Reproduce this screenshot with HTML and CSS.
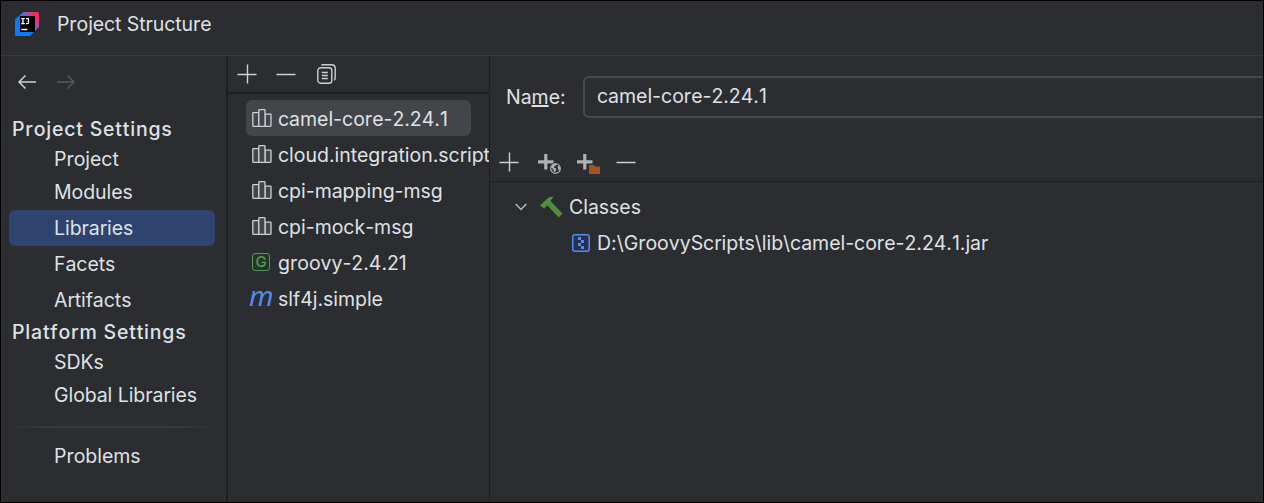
FILE: index.html
```html
<!DOCTYPE html>
<html lang="en">
<head>
<meta charset="utf-8">
<title>Project Structure</title>
<link rel="stylesheet" href="styles.css">
</head>
<body>
<svg class="defs" width="0" height="0">
  <symbol id="lib" viewBox="0 0 20 18">
    <g fill="#43454a" stroke="#ced0d6" stroke-width="1.3">
      <rect x="0.8" y="3.7" width="6" height="13.6" rx=".5"/>
      <rect x="13" y="5.2" width="6" height="12.1" rx=".5"/>
      <rect x="6.8" y="0.7" width="6.2" height="16.6" rx=".5"/>
    </g>
  </symbol>
  <symbol id="plus" viewBox="0 0 20 20"><path d="M10.500 .5v19M.5 10.500h19" stroke="#ced0d6" stroke-width="1.4"/></symbol>
  <symbol id="minus" viewBox="0 0 20 20"><path d="M.5 10.500h19" stroke="#ced0d6" stroke-width="1.5"/></symbol>
</svg>
<div class="window">
  <header class="titlebar">
    <svg class="logo" width="24" height="24" viewBox="0 0 24 24">
      <defs><linearGradient id="lg" x1="0.1" y1="0.8" x2="0.95" y2="0.15">
        <stop offset=".4" stop-color="#087cfa"/><stop offset=".68" stop-color="#8a5cc0"/><stop offset=".94" stop-color="#fe2857"/>
      </linearGradient></defs>
      <path d="M8.5 0H22.5Q24 0 24 1.5V15L15 24H1.5Q0 24 0 22.5V7.5Z" fill="url(#lg)"/>
      <rect x="5" y="4" width="15" height="16"/>
      <path d="M6.2 6.7h3.6M8 6.7v5M6.2 11.7h3.6M11 6.7h3M13.4 6.7v3.8q0 1.2-1.2 1.2H11M6.3 17.5h6" fill="none" stroke="#fff" stroke-width="1.3"/>
    </svg>
    <span>Project Structure</span>
  </header>
  <div class="body">
    <nav class="sidebar">
      <div class="history">
        <svg width="18" height="14" viewBox="0 0 18 14" fill="none" stroke="#ced0d6" stroke-width="1.5"><path d="M18 7H1M7.5.5L1 7l6.500 6.500"/></svg>
        <svg width="18" height="14" viewBox="0 0 18 14" fill="none" stroke="#57585b" stroke-width="1.5"><path d="M0 7H17M10.500.5L17 7l-6.500 6.500"/></svg>
      </div>
      <div class="section">Project Settings</div>
      <div class="item first">Project</div>
      <div class="item">Modules</div>
      <div class="item selected">Libraries</div>
      <div class="item">Facets</div>
      <div class="item">Artifacts</div>
      <div class="section platform">Platform Settings</div>
      <div class="item sdks">SDKs</div>
      <div class="item global">Global Libraries</div>
      <div class="separator"></div>
      <div class="item">Problems</div>
    </nav>
    <section class="libraries">
      <div class="toolbar">
        <svg width="20" height="20"><use href="#plus"/></svg>
        <svg width="20" height="20"><use href="#minus"/></svg>
        <svg class="copy" width="19" height="20" viewBox="0 0 19 20" fill="none" stroke="#ced0d6" stroke-width="1.4">
          <rect x=".8" y="3.800" width="14" height="15.400" rx="2.800"/>
          <path d="M4.300 1.200Q5 .8 6 .8h8.500q3.700 0 3.700 3.700v9.500q0 1.500-1 2.300M4.800 8.500h6M4.800 11.500h6M4.800 14.500h6"/>
        </svg>
      </div>
      <div class="list">
        <div class="row selected"><svg class="icon" width="20" height="18"><use href="#lib"/></svg><span class="text">camel-core-2.24.1</span></div>
        <div class="row"><svg class="icon" width="20" height="18"><use href="#lib"/></svg><span class="text">cloud.integration.script</span></div>
        <div class="row"><svg class="icon" width="20" height="18"><use href="#lib"/></svg><span class="text">cpi-mapping-msg</span></div>
        <div class="row"><svg class="icon" width="20" height="18"><use href="#lib"/></svg><span class="text">cpi-mock-msg</span></div>
        <div class="row"><span class="icon groovy"><span>G</span></span><span class="text">groovy-2.4.21</span></div>
        <div class="row"><span class="icon maven">m</span><span class="text">slf4j.simple</span></div>
      </div>
    </section>
    <main class="details">
      <div class="name-row">
        <label class="label">Na<span class="mnemonic">m</span>e:</label>
        <div class="field">camel-core-2.24.1</div>
      </div>
      <div class="actions">
        <svg width="20" height="20"><use href="#plus"/></svg>
        <svg class="add" width="24" height="21" viewBox="0 0 24 21">
          <path d="M7.800 1v15.500M0 8.800h15.500" stroke="#afb1b3" stroke-width="3.200"/>
          <circle cx="17.500" cy="15.500" r="6" fill="#2b2d30"/>
          <circle cx="17.500" cy="15.500" r="4.800" fill="#2b2d30" stroke="#afb1b3" stroke-width="1.200"/>
          <path d="M13 14.500l1.500-3 3.500-.8.500 1.300-2 1.200-.5 1.500 2 .8.300 1.200-1.300 2.500-1.500-1.500-.3-1.700zM19.500 13.500l2.500-.5v3.500l-1.500.5z" fill="#afb1b3"/>
        </svg>
        <svg class="add" width="24" height="21" viewBox="0 0 24 21">
          <path d="M7.800 1v15.500M0 8.800h15.500" stroke="#afb1b3" stroke-width="3.200"/>
          <path d="M12 12h5l1.500 1.500H23V21H12z" fill="#a65027"/>
        </svg>
        <svg width="20" height="20"><use href="#minus"/></svg>
      </div>
      <div class="tree">
        <div class="node">
          <svg class="chevron" width="12" height="8" viewBox="0 0 12 8" fill="none" stroke="#b4b8bf" stroke-width="1.500"><path d="M.7 1L6 6.500 11.300 1"/></svg>
          <svg class="hammer" width="23" height="22" viewBox="0 0 23 22"><path d="M0 9.500L8.500 1.500Q10 .6 13.500 .8L10.500 5 22.500 17.500 18.600 21.500 7.500 9.500 4 12.500Z" fill="#4d8f3a"/></svg>
          Classes
        </div>
        <div class="node leaf">
          <svg class="jar" width="18" height="18" viewBox="0 0 18 18"><rect x=".8" y=".8" width="16.400" height="16.400" rx="2.200" fill="#25324d" stroke="#548af7" stroke-width="1.500"/><path d="M6 3h3v3H6zM9 6h3v3H9zM6 9h3v3H6zM9 12h3v3H9z" fill="#548af7"/></svg>
          D:\GroovyScripts\lib\camel-core-2.24.1.jar
        </div>
      </div>
    </main>
  </div>
</div>
</body>
</html>
```
FILE: styles.css
```css
* { box-sizing: border-box; }
body {
  margin: 0;
  background: #000;
  color: #dfe1e5;
  font: 19.5px/24px Inter, "Liberation Sans", sans-serif;
  font-kerning: none;
  letter-spacing: -.03px;
}
.defs { position: absolute; }
svg { flex: none; display: block; }
.window {
  display: flex;
  flex-direction: column;
  width: 1264px;
  height: 503px;
  border: 1px solid #000;
  background: #2b2d30;
  overflow: hidden;
}
.titlebar {
  display: flex;
  align-items: center;
  gap: 18px;
  height: 55px;
  flex: none;
  padding: 0 14px 8px;
  border-bottom: 1px solid #393b40;
  letter-spacing: -.1px;
}
.body { display: flex; flex: 1; min-height: 0; }
.sidebar {
  width: 227px;
  flex: none;
  border-right: 2px solid #1e1f22;
}
.history { display: flex; align-items: center; gap: 21px; height: 58px; padding: 0 17px 6px; }
.section {
  height: 30px;
  padding-left: 11px;
  line-height: 30px;
  font-weight: 500;
  letter-spacing: .8px;
}
.platform { height: 28px; line-height: 28px; }
.item {
  height: 36px;
  margin: 0 11px 0 8px;
  padding-left: 45px;
  border-radius: 6px;
  line-height: 36px;
  letter-spacing: -.05px;
}
.first { height: 30px; line-height: 30px; }
.item.selected { background: #2e436e; }
.sdks { height: 32px; line-height: 32px; }
.global { height: 34px; line-height: 34px; }
.separator {
  height: 2px;
  margin: 14px 11px 10px 8px;
  background: linear-gradient(90deg, transparent, #393b40 20%, #393b40 80%, transparent);
}
.libraries { width: 262px; flex: none; border-right: 1px solid #1e1f22; overflow: hidden; }
.toolbar {
  display: flex;
  align-items: center;
  gap: 19px;
  height: 38px;
  padding: 0 9px;
  border-bottom: 2px solid #1e1f22;
}
.copy { margin-left: 2px; }
.list { padding: 6px 0 0 18px; }
.row {
  display: flex;
  align-items: center;
  width: 225px;
  height: 36px;
  padding-left: 6px;
  border-radius: 6px;
  white-space: nowrap;
}
.row.selected { background: #43454a; }
.text { padding-top: 2px; }
.icon { flex: none; width: 20px; margin-right: 6px; }
.groovy span {
  display: block;
  width: 18px;
  height: 18px;
  border: 1px solid #57965c;
  border-radius: 3px;
  background: #253627;
  color: #57965c;
  font-size: 15px;
  font-weight: 500;
  line-height: 16px;
  text-align: center;
}
.maven {
  margin-left: -3px;
  margin-right: 9px;
  color: #548af7;
  font: italic 28px/30px "Noto Sans", sans-serif;
  height: 36px;
}
.details { display: flex; flex-direction: column; flex: 1; min-width: 0; }
.name-row { display: flex; align-items: center; height: 82px; padding-left: 16px; }
.label { width: 77px; padding-bottom: 1px; }
.mnemonic { text-decoration: underline; text-decoration-thickness: 2px; text-underline-offset: 1px; text-decoration-skip-ink: none; }
.field {
  flex: 1;
  height: 42px;
  padding-left: 12px;
  border: 2px solid #47494e;
  border-right: 0;
  border-radius: 6px 0 0 6px;
  line-height: 37px;
}
.actions {
  display: flex;
  align-items: center;
  gap: 19px;
  height: 44px;
  padding: 5px 9px 0;
  border-bottom: 1px solid #1e1f22;
}
.add { margin-right: -4px; margin-top: 3px; }
.tree { padding: 7px 0 0 25px; }
.node { display: flex; align-items: center; height: 36px; white-space: nowrap; }
.hammer { margin: 0 6px 0 13px; }
.leaf { padding-left: 57px; }
.jar { margin-right: 7px; }
```
